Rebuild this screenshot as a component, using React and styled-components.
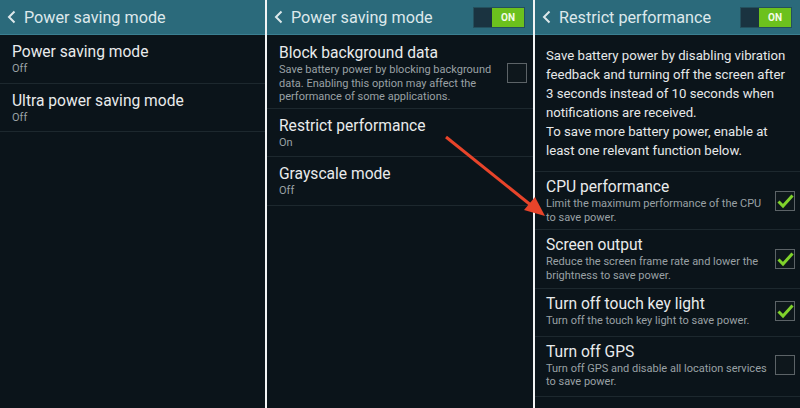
import styled, { createGlobalStyle } from "styled-components";

const GlobalStyle = createGlobalStyle`
  html, body {
    margin: 0;
    padding: 0;
    background: #0b141a;
  }
  body {
    font-family: Roboto, "Liberation Sans", sans-serif;
  }
`;

const Screen = styled.div`
  position: relative;
  display: flex;
  width: 800px;
  height: 408px;
  overflow: hidden;
  background: #f2f4f5;
`;

const Panel = styled.div`
  display: flex;
  flex-direction: column;
  width: ${(p) => p.width}px;
  margin-left: ${(p) => (p.first ? 0 : 2)}px;
  background: #0b141a;
`;

const Header = styled.div`
  display: flex;
  align-items: center;
  height: 34px;
  padding: 0 8px 0 7px;
  background: #2b6a7b;
  border-bottom: 1px solid #3b7f91;
  color: #dde8eb;
  font-size: 16.2px;
`;

const Back = styled.svg`
  width: 9px;
  height: 14px;
  margin-right: 8px;
  flex: none;
`;

const HeaderTitle = styled.div`
  flex: 1;
  white-space: nowrap;
`;

const Toggle = styled.div`
  display: flex;
  width: 50px;
  height: 19px;
  border: 1px solid #24505d;
`;

const ToggleOff = styled.div`
  width: 18px;
  background: #1a3340;
`;

const ToggleOn = styled.div`
  flex: 1;
  display: flex;
  align-items: center;
  justify-content: center;
  background: #6cc11d;
  color: #f3fbe8;
  font-size: 10px;
  font-weight: 700;
`;

const Row = styled.div`
  display: flex;
  align-items: center;
  padding: ${(p) => p.pad || "7px 12px 7px 12px"};
  border-bottom: 1px solid #1d282e;
`;

const RowText = styled.div`
  flex: 1;
`;

const Title = styled.div`
  color: #e9ebec;
  font-size: 15.6px;
  line-height: 20px;
  white-space: nowrap;
`;

const Sub = styled.div`
  color: #9aa1a5;
  font-size: 11px;
  line-height: 13.5px;
`;

const Intro = styled.div`
  padding: 11px 12px 11px 11px;
  color: #e6e8e9;
  font-size: 13.2px;
  line-height: 19px;
  border-bottom: 1px solid #1d282e;
`;

const Box = styled.div`
  flex: none;
  position: relative;
  width: 18px;
  height: 18px;
  margin-left: 8px;
  border: 1px solid #5c6367;
  background: #0e171c;
`;

const Check = styled.svg`
  position: absolute;
  left: 1px;
  top: 1px;
  width: 17px;
  height: 16px;
`;

const Arrow = styled.svg`
  position: absolute;
  left: 0;
  top: 0;
  width: 800px;
  height: 408px;
  pointer-events: none;
`;

function Chevron() {
  return (
    <Back viewBox="0 0 9 14">
      <path d="M7.5 1.5 L2 7 L7.5 12.5" fill="none" stroke="#dde8eb" strokeWidth="2" />
    </Back>
  );
}

function CheckBox({ checked }) {
  return (
    <Box>
      {checked && (
        <Check viewBox="0 0 17 16">
          <path d="M1.5 8.5 L6 13 L15.5 2.5" fill="none" stroke="#7fd22b" strokeWidth="3" />
        </Check>
      )}
    </Box>
  );
}

function Item({ title, sub, pad, box, checked }) {
  return (
    <Row pad={pad}>
      <RowText>
        <Title>{title}</Title>
        <Sub>{sub}</Sub>
      </RowText>
      {box && <CheckBox checked={checked} />}
    </Row>
  );
}

const options = [
  {
    title: "CPU performance",
    sub: (
      <>
        Limit the maximum performance of the CPU
        <br />
        to save power.
      </>
    ),
    checked: true,
    pad: "5px 5px 5px 11px",
  },
  {
    title: "Screen output",
    sub: (
      <>
        Reduce the screen frame rate and lower the
        <br />
        brightness to save power.
      </>
    ),
    checked: true,
    pad: "5px 5px 6px 11px",
  },
  {
    title: "Turn off touch key light",
    sub: "Turn off the touch key light to save power.",
    checked: true,
    pad: "5px 5px 8px 11px",
  },
  {
    title: "Turn off GPS",
    sub: (
      <>
        Turn off GPS and disable all location services
        <br />
        to save power.
      </>
    ),
    checked: false,
    pad: "5px 5px 7px 11px",
  },
];

export default function App() {
  return (
    <>
      <GlobalStyle />
      <Screen>
        <Panel width={265} first>
          <Header>
            <Chevron />
            <HeaderTitle>Power saving mode</HeaderTitle>
          </Header>
          <Item title="Power saving mode" sub="Off" />
          <Item title="Ultra power saving mode" sub="Off" />
        </Panel>

        <Panel width={266}>
          <Header>
            <Chevron />
            <HeaderTitle>Power saving mode</HeaderTitle>
            <Toggle>
              <ToggleOff />
              <ToggleOn>ON</ToggleOn>
            </Toggle>
          </Header>
          <Item
            title="Block background data"
            sub={
              <>
                Save battery power by blocking background
                <br />
                data. Enabling this option may affect the
                <br />
                performance of some applications.
              </>
            }
            pad="8px 6px 4px 12px"
            box
          />
          <Item title="Restrict performance" sub="On" />
          <Item title="Grayscale mode" sub="Off" />
        </Panel>

        <Panel width={265}>
          <Header>
            <Chevron />
            <HeaderTitle>Restrict performance</HeaderTitle>
            <Toggle>
              <ToggleOff />
              <ToggleOn>ON</ToggleOn>
            </Toggle>
          </Header>
          <Intro>
            Save battery power by disabling vibration
            <br />
            feedback and turning off the screen after
            <br />
            3 seconds instead of 10 seconds when
            <br />
            notifications are received.
            <br />
            To save more battery power, enable at
            <br />
            least one relevant function below.
          </Intro>
          {options.map((o) => (
            <Item key={o.title} title={o.title} sub={o.sub} pad={o.pad} checked={o.checked} box />
          ))}
        </Panel>

        <Arrow viewBox="0 0 800 408">
          <line x1="446" y1="137" x2="532" y2="206" stroke="#e8442a" strokeWidth="3" />
          <polygon points="545,216 524,210 535,197" fill="#e8442a" />
        </Arrow>
      </Screen>
    </>
  );
}
